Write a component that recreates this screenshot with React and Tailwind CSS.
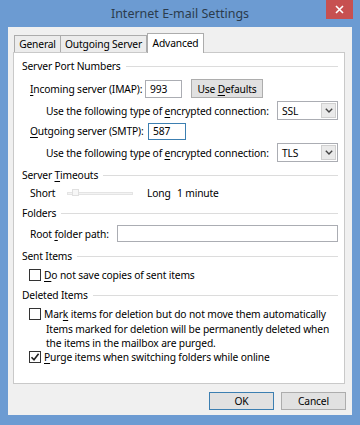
import React from "react";

function GroupHeader({ children, className = "" }) {
  return (
    <div className={`flex h-[16px] items-center gap-[5px] ${className}`}>
      <span className="whitespace-nowrap">{children}</span>
      <div className="h-px flex-1 bg-[#dcdcdc]" />
    </div>
  );
}

function Checkbox({ checked }) {
  return (
    <span className="flex h-[12px] w-[12px] shrink-0 items-center justify-center border border-[#333] bg-white">
      {checked && (
        <svg width="10" height="10" viewBox="0 0 10 10">
          <path d="M1.5 5.2 L4 7.8 L8.6 1.8" fill="none" stroke="#222" strokeWidth="1.6" />
        </svg>
      )}
    </span>
  );
}

function Select({ value }) {
  return (
    <div className="flex h-[19px] w-[61px] shrink-0 items-stretch border border-[#abadb3] bg-white">
      <span className="flex flex-1 items-center pl-[4px]">{value}</span>
      <span className="m-[1px] flex w-[15px] items-center justify-center border border-[#d0d0d0] bg-[#eaeaea]">
        <svg width="8" height="5" viewBox="0 0 8 5">
          <path d="M0.8 0.8 L4 4 L7.2 0.8" fill="none" stroke="#444" strokeWidth="1.4" />
        </svg>
      </span>
    </div>
  );
}

export default function App() {
  return (
    <div className="flex h-[425px] w-[360px] flex-col overflow-hidden whitespace-nowrap bg-[#6c9bd2] font-['Noto_Sans','Open_Sans',sans-serif] text-[10.25px] leading-[16px] tracking-[-0.15px] text-black">
      <div className="relative flex h-[27px] items-center justify-center">
        <span className="text-[12.5px] tracking-normal text-[#2b3b4d]">Internet E-mail Settings</span>
        <div className="absolute right-[7px] top-0 flex h-[19px] w-[27px] items-center justify-center bg-[#c75050]">
          <svg width="9" height="9" viewBox="0 0 9 9">
            <path d="M1 1 L8 8 M8 1 L1 8" stroke="#fff" strokeWidth="1.6" />
          </svg>
        </div>
      </div>

      <div className="mx-[8px] flex h-[388px] flex-col bg-[#f0f0f0]">
        <div className="flex h-[25px] items-end pl-[6px]">
          <div className="flex h-[17px] w-[47px] items-center justify-center border border-b-0 border-[#acacac] bg-[#ececec]">
            General
          </div>
          <div className="flex h-[17px] w-[86px] items-center justify-center border border-b-0 border-l-0 border-[#acacac] bg-[#ececec]">
            Outgoing Server
          </div>
          <div className="relative z-10 -mb-px flex h-[20px] w-[57px] items-center justify-center border border-b-0 border-[#acacac] bg-white pb-[2px]">
            Advanced
          </div>
        </div>

        <div className="ml-[5px] mr-[7px] flex h-[332px] flex-col border border-[#c9c9c9] bg-white pl-[8px] pr-[6px] pt-[5px]">
          <GroupHeader>Server Port Numbers</GroupHeader>
          <div className="mt-[5px] flex h-[19px] items-center pl-[8px]">
            <span className="w-[115px]">
              <u className="underline-offset-2">I</u>ncoming server (IMAP):
            </span>
            <div className="flex h-[18px] w-[37px] items-center border border-[#abadb3] pl-[4px]">993</div>
            <div className="ml-[9px] flex h-[19px] w-[72px] items-center justify-center border border-[#adadad] bg-[#e1e1e1]">
              Use&nbsp;<u className="underline-offset-2">D</u>efaults
            </div>
          </div>
          <div className="mt-[3px] flex h-[19px] items-center justify-between pl-[24px]">
            <span>
              Use the following type of <u className="underline-offset-2">e</u>ncrypted connection:
            </span>
            <Select value="SSL" />
          </div>
          <div className="mt-[2px] flex h-[18px] items-center pl-[8px]">
            <span className="w-[118px]">
              <u className="underline-offset-2">O</u>utgoing server (SMTP):
            </span>
            <div className="flex h-[17px] w-[38px] items-center border border-[#3c7fb1] pl-[4px]">587</div>
          </div>
          <div className="mt-[3px] flex h-[19px] items-center justify-between pl-[24px]">
            <span>
              Use the following type of <u className="underline-offset-2">e</u>ncrypted connection:
            </span>
            <Select value="TLS" />
          </div>

          <GroupHeader className="mt-[5px]">
            <span>
              Server <u className="underline-offset-2">T</u>imeouts
            </span>
          </GroupHeader>
          <div className="mt-[2px] flex h-[16px] items-center pl-[8px]">
            <span className="w-[37px]">Short</span>
            <div className="relative flex h-[8px] w-[66px] items-center">
              <div className="h-[3px] w-full border border-[#e4e4e4] bg-[#f3f3f3]" />
              <div className="absolute left-[5px] top-0 h-[7px] w-[7px] border border-[#e0e0e0] bg-[#f7f7f7]" />
            </div>
            <span className="ml-[14px] w-[30px]">Long</span>
            <span>1 minute</span>
          </div>

          <GroupHeader className="mt-[4px]">Folders</GroupHeader>
          <div className="mt-[4px] flex h-[17px] items-center pl-[8px]">
            <span className="w-[87px]">
              Root <u className="underline-offset-2">f</u>older path:
            </span>
            <div className="h-[17px] flex-1 border border-[#abadb3]" />
          </div>

          <GroupHeader className="mt-[6px]">Sent Items</GroupHeader>
          <div className="mt-[3px] flex h-[16px] items-center gap-[3px] pl-[7px]">
            <Checkbox />
            <span>
              <u className="underline-offset-2">D</u>o not save copies of sent items
            </span>
          </div>

          <GroupHeader className="mt-[4px]">Deleted Items</GroupHeader>
          <div className="mt-[3px] flex h-[16px] items-center gap-[3px] pl-[7px]">
            <Checkbox />
            <span>
              Mar<u className="underline-offset-2">k</u> items for deletion but do not move them automatically
            </span>
          </div>
          <div className="pl-[24px] leading-[14px]">
            Items marked for deletion will be permanently deleted when
            <br />
            the items in the mailbox are purged.
          </div>
          <div className="flex h-[14px] items-center gap-[3px] pl-[7px]">
            <Checkbox checked />
            <span>
              <u className="underline-offset-2">P</u>urge items when switching folders while online
            </span>
          </div>
        </div>

        <div className="mt-[8px] flex justify-end gap-[7px] pr-[6px]">
          <div className="flex h-[18px] w-[65px] items-center justify-center border border-[#3c7fb1] bg-[#e1e1e1]">
            OK
          </div>
          <div className="flex h-[18px] w-[65px] items-center justify-center border border-[#adadad] bg-[#e1e1e1]">
            Cancel
          </div>
        </div>
      </div>
    </div>
  );
}
